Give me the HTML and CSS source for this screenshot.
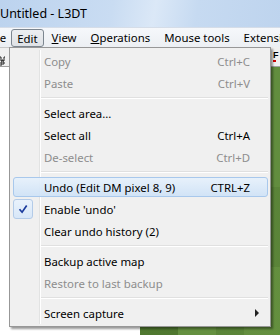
FILE: index.html
```html
<!DOCTYPE HTML>
<html>

<head>
    <meta charset="UTF-8">
    <title>Untitled - L3DT</title>
    <link rel="stylesheet" href="styles.css">
</head>

<body>
    <div class="window">
        <div class="titlebar">
            <span class="title">Untitled - L3DT</span>
        </div>
        <div class="menubar">
            <span class="mb-item file">File</span>
            <span class="mb-item active">Edit</span>
            <span class="mb-item"><u>V</u>iew</span>
            <span class="mb-item"><u>O</u>perations</span>
            <span class="mb-item">Mouse tools</span>
            <span class="mb-item">Extensions</span>
        </div>
        <div class="toolbar">
            <div class="tb-left">
                <svg width="8" height="10" viewBox="0 0 8 10">
                    <path d="M0 1h1v4h1v-1h1v1h1v-4h1" fill="none" stroke="#222" stroke-width="1"/>
                    <path d="M1 6h3v2h-3zM1 8v2" fill="none" stroke="#222" stroke-width="1"/>
                </svg>
            </div>
            <div class="tb-right">
                <span class="tb-f">F</span>
                <span class="tb-dot"></span>
            </div>
        </div>
        <div class="workspace">
            <div class="blank"></div>
            <div class="map"></div>
        </div>

        <div class="menu">
            <div class="item disabled"><span>Copy</span><span class="key">Ctrl+C</span></div>
            <div class="item disabled"><span>Paste</span><span class="key">Ctrl+V</span></div>
            <div class="sep"></div>
            <div class="item"><span>Select area...</span></div>
            <div class="item"><span>Select all</span><span class="key">Ctrl+A</span></div>
            <div class="item disabled"><span>De-select</span><span class="key">Ctrl+D</span></div>
            <div class="sep"></div>
            <div class="item hover"><span>Undo (Edit DM pixel 8, 9)</span><span class="key">CTRL+Z</span></div>
            <div class="item checked">
                <span class="check">
                    <svg width="20" height="20" viewBox="0 0 20 20">
                        <path d="M6.5 10.2l2.6 3l4.6-6.6" fill="none" stroke="#1a3a9c" stroke-width="1.7"/>
                    </svg>
                </span>
                <span>Enable 'undo'</span>
            </div>
            <div class="item"><span>Clear undo history (2)</span></div>
            <div class="sep"></div>
            <div class="item"><span>Backup active map</span></div>
            <div class="item disabled"><span>Restore to last backup</span></div>
            <div class="sep"></div>
            <div class="item">
                <span>Screen capture</span>
                <svg class="arrow" width="5" height="8" viewBox="0 0 5 8">
                    <path d="M0 0l4 4l-4 4z" fill="#222"/>
                </svg>
            </div>
        </div>
    </div>
</body>

</html>
```

FILE: styles.css
```css
body {
    margin: 0;
    width: 280px;
    height: 335px;
    overflow: hidden;
    font-family: "Noto Sans", "Open Sans", sans-serif;
    font-size: 11.4px;
    color: #000;
    background: #fff;
}

.window {
    position: relative;
    width: 280px;
    height: 335px;
    display: flex;
    flex-direction: column;
    overflow: hidden;
}

.titlebar {
    height: 27px;
    display: flex;
    align-items: center;
    background: linear-gradient(100deg, #bcd3ee 0%, #c9dcf2 40%, #dbe8f7 55%, #c6daf1 70%, #bed4ee 100%);
}

.title {
    font-size: 12.5px;
    margin-top: -1px;
}

.menubar {
    height: 20px;
    display: flex;
    align-items: stretch;
    white-space: nowrap;
    background: linear-gradient(#f6f8fb, #eceff3);
    border-top: 1px solid #d5dde8;
    box-sizing: border-box;
}

.mb-item {
    display: flex;
    align-items: center;
    padding: 0 7px;
}

.mb-item.file {
    margin-left: -19px;
    padding-right: 5px;
}

.mb-item.active {
    margin: 1px 1px 0 0;
    padding: 0 5px;
    border: 1px solid #7c8690;
    border-radius: 3px;
    background: linear-gradient(#eceef1, #dfe2e6);
}

.toolbar {
    height: 19px;
    display: flex;
    justify-content: space-between;
    background: #f0f0f0;
    border-bottom: 1px solid #a0a0a0;
}

.tb-left {
    width: 9px;
    padding-top: 6px;
    border-top: 1px solid #c8c8c8;
    box-sizing: border-box;
}

.tb-right {
    width: 9px;
    display: flex;
    flex-direction: column;
    align-items: flex-start;
    gap: 1px;
    padding-top: 5px;
    padding-left: 2px;
    box-sizing: border-box;
    line-height: 7px;
}

.tb-f {
    font-family: "Liberation Sans", sans-serif;
    font-weight: bold;
    font-size: 9px;
}

.tb-dot {
    width: 3px;
    height: 2px;
    background: #d00000;
}

.workspace {
    flex: 1;
    display: flex;
}

.blank {
    width: 140px;
    background: #fff;
}

.map {
    flex: 1;
    background-color: #5f8c3c;
    background-image:
        linear-gradient(90deg, rgba(30, 60, 10, 0.25) 0 38px, rgba(120, 160, 80, 0.2) 38px 76px, rgba(40, 70, 20, 0.1) 76px 104px, rgba(110, 150, 70, 0.25) 104px),
        linear-gradient(rgba(90, 130, 60, 0.2) 0 120px, rgba(40, 70, 20, 0.2) 120px 200px, rgba(100, 140, 60, 0.2) 200px);
}

.menu {
    position: absolute;
    left: 9px;
    top: 47px;
    width: 262px;
    box-sizing: border-box;
    padding: 2px 2px 2px 3px;
    background: #f0f0f0;
    border: 1px solid #979797;
    box-shadow: 2px 2px 2px rgba(0, 0, 0, 0.4);
}

.menu::before {
    content: "";
    position: absolute;
    left: 29px;
    top: 2px;
    bottom: 2px;
    width: 1px;
    background: #e2e3e3;
    border-right: 1px solid #fff;
}

.item {
    position: relative;
    height: 22px;
    display: flex;
    align-items: center;
    justify-content: space-between;
    padding: 0 18px 0 31px;
    box-sizing: border-box;
    white-space: nowrap;
}

.item.disabled {
    color: #8d8d8d;
}

.item.hover::after {
    content: "";
    position: absolute;
    left: 0;
    right: 0;
    top: 1px;
    bottom: 1px;
    border: 1px solid #a8c8ec;
    border-radius: 3px;
    background: linear-gradient(rgba(230, 241, 252, 0.9), rgba(206, 226, 247, 0.9));
    z-index: 0;
}

.item span {
    position: relative;
    z-index: 1;
}

.check {
    position: absolute !important;
    left: 0;
    top: 1px;
    width: 20px;
    height: 20px;
    box-sizing: border-box;
    border: 1px solid #b3cbe8;
    border-radius: 3px;
    background: linear-gradient(#e9f2fc, #d8e7f8);
}

.check svg {
    position: absolute;
    left: -1px;
    top: -1px;
}

.arrow {
    margin-right: -10px;
}

.sep {
    height: 8px;
    display: flex;
    flex-direction: column;
    justify-content: center;
    margin-left: 28px;
}

.sep::before {
    content: "";
    height: 1px;
    background: #e0e0e0;
    border-bottom: 1px solid #fff;
}
```
